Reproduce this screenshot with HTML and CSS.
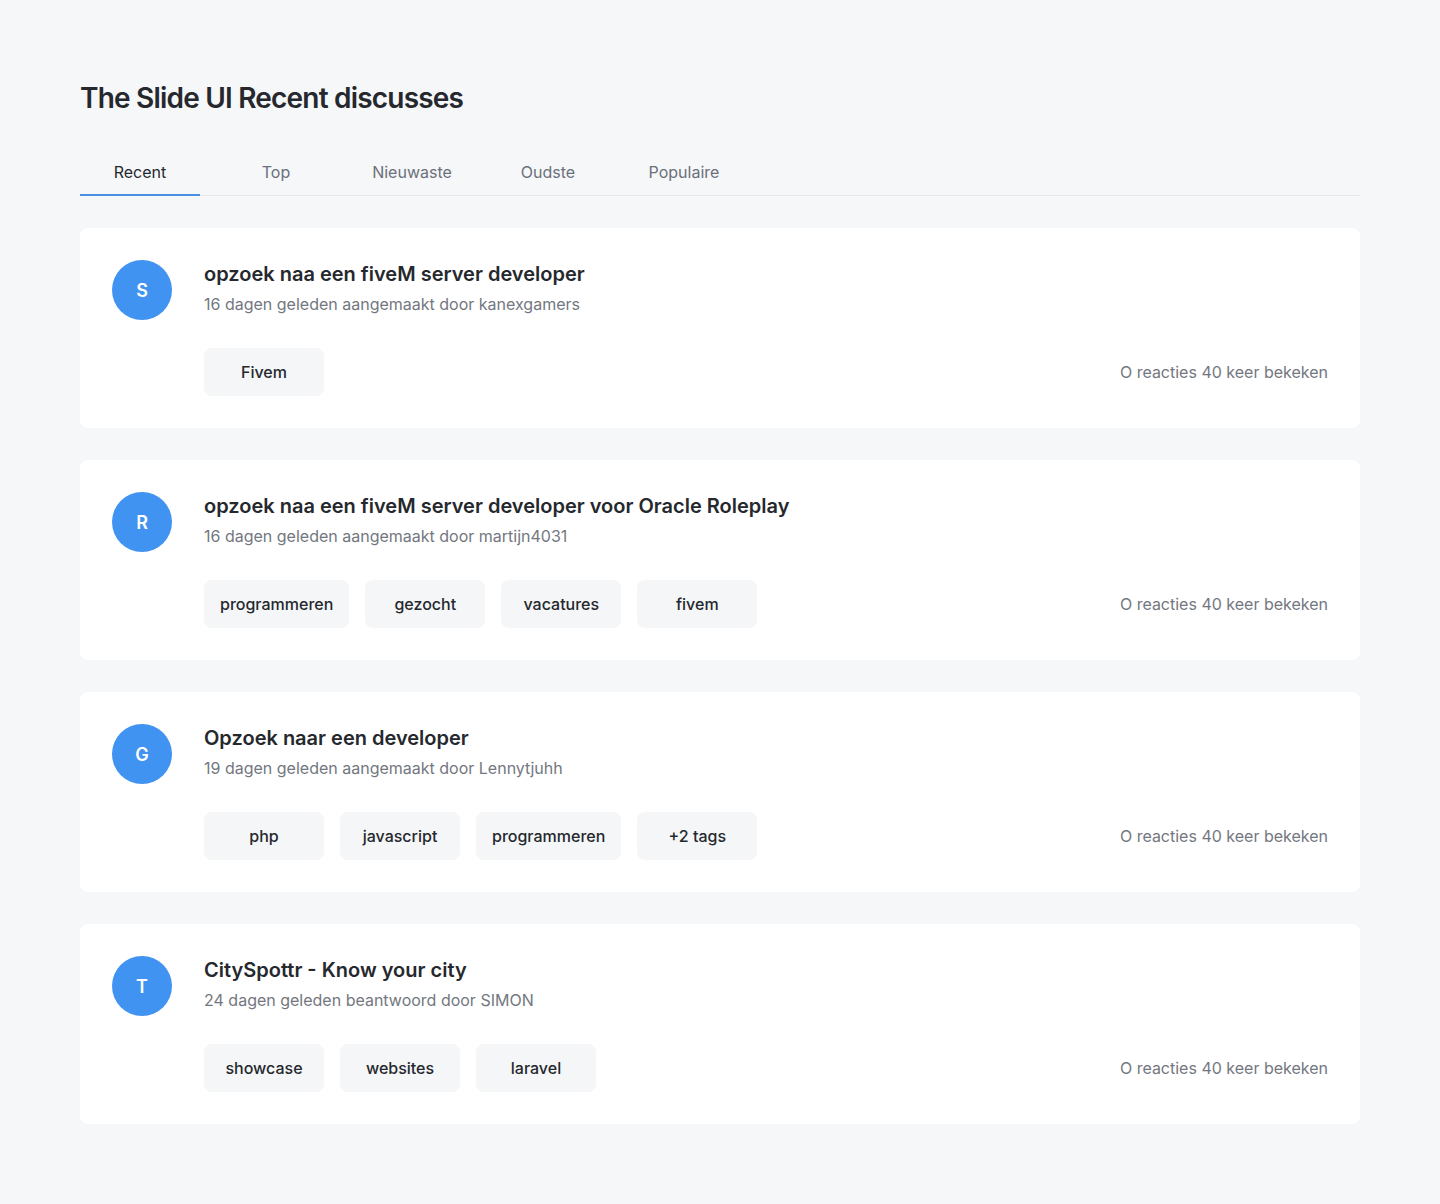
FILE: index.html
```html
<!DOCTYPE html>
<html lang="nl">
<head>
<meta charset="utf-8">
<title>The Slide UI Recent discusses</title>
<link rel="stylesheet" href="styles.css">
</head>
<body>
<main class="page">
  <h1 class="title">The Slide UI Recent discusses</h1>
  <nav class="tabs">
    <a class="tab active">Recent</a>
    <a class="tab">Top</a>
    <a class="tab">Nieuwaste</a>
    <a class="tab">Oudste</a>
    <a class="tab">Populaire</a>
  </nav>
  <section class="list">
    <article class="card">
      <div class="avatar">S</div>
      <div class="body">
        <h2 class="card-title">opzoek naa een fiveM server developer</h2>
        <p class="meta">16 dagen geleden aangemaakt door kanexgamers</p>
        <div class="footer">
          <div class="tags"><span class="tag">Fivem</span></div>
          <span class="stats">O reacties 40 keer bekeken</span>
        </div>
      </div>
    </article>
    <article class="card">
      <div class="avatar">R</div>
      <div class="body">
        <h2 class="card-title">opzoek naa een fiveM server developer voor Oracle Roleplay</h2>
        <p class="meta">16 dagen geleden aangemaakt door martijn4031</p>
        <div class="footer">
          <div class="tags"><span class="tag">programmeren</span><span class="tag">gezocht</span><span class="tag">vacatures</span><span class="tag">fivem</span></div>
          <span class="stats">O reacties 40 keer bekeken</span>
        </div>
      </div>
    </article>
    <article class="card">
      <div class="avatar">G</div>
      <div class="body">
        <h2 class="card-title">Opzoek naar een developer</h2>
        <p class="meta">19 dagen geleden aangemaakt door Lennytjuhh</p>
        <div class="footer">
          <div class="tags"><span class="tag">php</span><span class="tag">javascript</span><span class="tag">programmeren</span><span class="tag">+2 tags</span></div>
          <span class="stats">O reacties 40 keer bekeken</span>
        </div>
      </div>
    </article>
    <article class="card">
      <div class="avatar">T</div>
      <div class="body">
        <h2 class="card-title">CitySpottr - Know your city</h2>
        <p class="meta">24 dagen geleden beantwoord door SIMON</p>
        <div class="footer">
          <div class="tags"><span class="tag">showcase</span><span class="tag">websites</span><span class="tag">laravel</span></div>
          <span class="stats">O reacties 40 keer bekeken</span>
        </div>
      </div>
    </article>
  </section>
</main>
</body>
</html>
```

FILE: styles.css
```css
* { box-sizing: border-box; }
html, body { margin: 0; padding: 0; }
body {
  background: #f6f7f9;
  font-family: Inter, "Noto Sans", sans-serif;
  color: #24292f;
}
.page {
  width: 1280px;
  margin: 0 auto;
  padding: 80px 0 80px;
}
.title {
  margin: 0;
  font-size: 28px;
  line-height: 36px;
  font-weight: 600;
  letter-spacing: -0.8px;
  color: #25282d;
}
.tabs {
  display: flex;
  gap: 16px;
  margin-top: 40px;
  border-bottom: 1px solid #e6e8eb;
}
.tab {
  width: 120px;
  text-align: center;
  font-size: 16px;
  line-height: 24px;
  padding: 4px 0 10px;
  color: #6b7079;
  margin-bottom: -1px;
  border-bottom: 2px solid transparent;
}
.tab.active {
  color: #25282d;
  border-bottom-color: #4a90e2;
}
.list {
  display: flex;
  flex-direction: column;
  gap: 32px;
  margin-top: 32px;
}
.card {
  background: #fff;
  border-radius: 8px;
  padding: 32px;
  display: flex;
  gap: 32px;
}
.avatar {
  width: 60px;
  height: 60px;
  flex: none;
  border-radius: 50%;
  background: #4193f1;
  color: #fff;
  font-size: 18px;
  font-weight: 600;
  display: flex;
  align-items: center;
  justify-content: center;
}
.body { flex: 1; min-width: 0; }
.card-title {
  margin: 0;
  font-size: 20px;
  line-height: 28px;
  font-weight: 600;
  color: #25282d;
}
.meta {
  margin: 4px 0 0;
  font-size: 16px;
  line-height: 24px;
  color: #737780;
}
.footer {
  margin-top: 32px;
  display: flex;
  align-items: center;
  justify-content: space-between;
}
.tags { display: flex; gap: 16px; }
.tag {
  min-width: 120px;
  height: 48px;
  padding: 0 16px;
  border-radius: 8px;
  background: #f5f6f8;
  display: flex;
  align-items: center;
  justify-content: center;
  font-size: 16px;
  font-weight: 500;
  color: #25282d;
}
.stats {
  font-size: 16px;
  line-height: 24px;
  color: #737780;
}
```
